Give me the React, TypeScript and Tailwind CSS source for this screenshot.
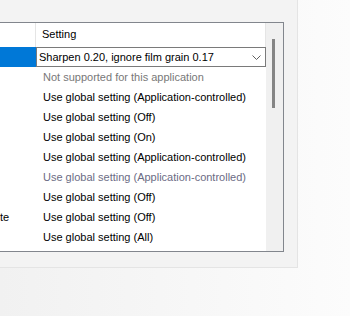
import React from 'react'

type Row = { left?: string; text: string; dim?: 'gray' | 'muted' }

const ROWS: Row[] = [
  { text: 'Not supported for this application', dim: 'gray' },
  { text: 'Use global setting (Application-controlled)' },
  { text: 'Use global setting (Off)' },
  { text: 'Use global setting (On)' },
  { text: 'Use global setting (Application-controlled)' },
  { text: 'Use global setting (Application-controlled)', dim: 'muted' },
  { text: 'Use global setting (Off)' },
  { left: 'te', text: 'Use global setting (Off)' },
  { text: 'Use global setting (All)' },
]

function Chevron() {
  return (
    <svg width="9" height="5" viewBox="0 0 9 5" className="shrink-0">
      <path d="M0.5 0.5 L4.5 4.5 L8.5 0.5" fill="none" stroke="#606060" strokeWidth="1" />
    </svg>
  )
}

export default function App() {
  return (
    <div
      className="w-[350px] h-[316px] overflow-hidden bg-gradient-to-r from-[#f1f1f1] to-[#fcfcfc] text-[11px] text-black"
      style={{ fontFamily: '"Liberation Sans", Arial, sans-serif' }}
    >
      {/* dialog panel */}
      <div className="w-[298px] h-[268px] bg-[#f3f3f3] border-r border-b border-[#e4e4e4] pt-[22px]">
        {/* list view */}
        <div className="w-[284px] h-[230px] bg-white border-y border-r border-[#82868d] flex overflow-hidden">
          <div className="w-[266px] shrink-0 flex flex-col">
            {/* header */}
            <div className="h-[24px] flex shrink-0">
              <div className="w-[36px] shrink-0 border-r border-[#e5e5e5]" />
              <div className="flex-1 pl-[6px] flex items-center border-r border-[#e5e5e5] leading-none pb-[1px]">
                Setting
              </div>
            </div>

            {/* selected row with combo */}
            <div className="h-[20px] flex shrink-0">
              <div className="w-[36px] shrink-0 bg-[#0078d7]" />
              <div className="flex-1 border border-[#7a7a7a] bg-white flex items-center pl-[2px] pr-[4px] leading-none">
                <span className="flex-1 whitespace-nowrap overflow-hidden">Sharpen 0.20, ignore film grain 0.17</span>
                <Chevron />
              </div>
            </div>

            {ROWS.map((r, i) => (
              <div key={i} className="h-[20px] flex items-center shrink-0 leading-none">
                <div className="w-[36px] shrink-0 whitespace-nowrap overflow-hidden">{r.left ?? ''}</div>
                <div
                  className={`pl-[7px] whitespace-nowrap ${
                    r.dim === 'gray' ? 'text-[#787878]' : r.dim === 'muted' ? 'text-[#6b6b84]' : ''
                  }`}
                >
                  {r.text}
                </div>
              </div>
            ))}
          </div>

          {/* scrollbar */}
          <div className="w-[17px] shrink-0 bg-[#f0f0f0] pt-[16px] pl-[6px]">
            <div className="w-[3px] h-[69px] bg-[#858585]" />
          </div>
        </div>
      </div>
    </div>
  )
}
